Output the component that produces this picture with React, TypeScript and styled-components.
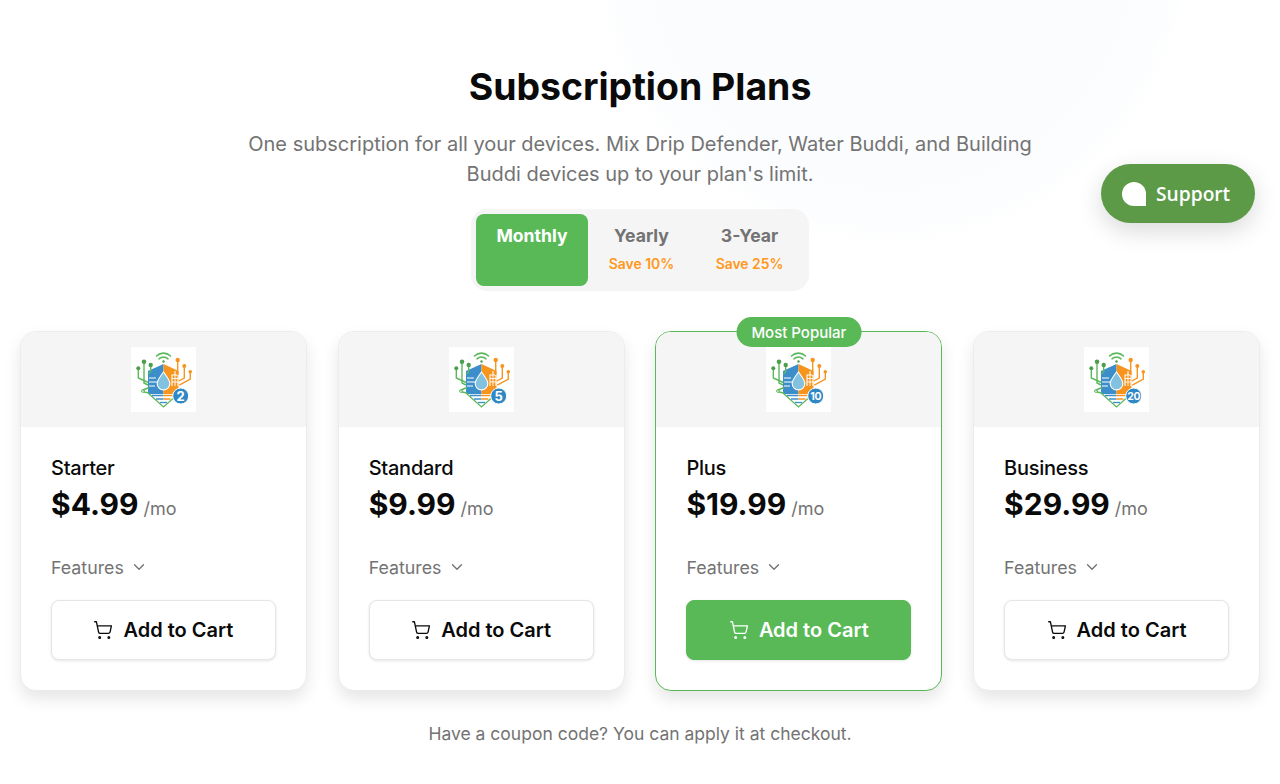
import React from "react";
import styled, { createGlobalStyle } from "styled-components";
import { ShoppingCart, ChevronDown } from "lucide-react";

const Global = createGlobalStyle`
  html, body { margin: 0; padding: 0; background: #fff; }
  body { font-family: Inter, "Liberation Sans", sans-serif; overflow: hidden; }
  * { box-sizing: border-box; }
`;

const Page = styled.div`
  position: relative;
  height: 784px;
  padding: 60px 20px 0;
  overflow: hidden;
  background: radial-gradient(circle 302px at 892px -55px, #fafcfd 0%, #fbfcfe 80%, #fcfdfe 92%, rgba(255,255,255,0) 100%), #fff;
`;

const Header = styled.header`
  display: flex;
  flex-direction: column;
  align-items: center;
`;

const Title = styled.h1`
  margin: 0;
  font-size: 37.4px;
  line-height: 54px;
  font-weight: 700;
  color: #0a0a0a;
`;

const Subtitle = styled.p`
  margin: 15px 0 0;
  width: 800px;
  font-size: 20px;
  line-height: 30px;
  font-weight: 400;
  color: #737373;
  text-align: center;
`;

const Toggle = styled.div`
  display: flex;
  margin-top: 20px;
  padding: 5px;
  background: #f5f5f5;
  border-radius: 16px;
`;

const ToggleButton = styled.div<{ $active?: boolean; $w: number }>`
  width: ${p => p.$w}px;
  height: 72px;
  padding-top: 10px;
  display: flex;
  flex-direction: column;
  align-items: center;
  border-radius: 8px;
  background: ${p => (p.$active ? "#59b957" : "transparent")};
  color: ${p => (p.$active ? "#fff" : "#737373")};
  font-size: 17.6px;
  line-height: 24px;
  font-weight: 700;
`;

const Save = styled.span`
  margin-top: 6px;
  font-size: 13.9px;
  line-height: 20px;
  font-weight: 600;
  color: #ff9820;
`;

const Grid = styled.div`
  display: grid;
  grid-template-columns: repeat(4, 1fr);
  gap: 30.8px;
  margin-top: 40px;
`;

const Card = styled.article<{ $popular?: boolean }>`
  position: relative;
  height: 360px;
  border: 1px solid ${p => (p.$popular ? "#59b957" : "#ececec")};
  border-radius: 16px;
  background: #fff;
  box-shadow: 0 8px 16px rgba(0, 0, 0, 0.1);
`;

const Badge = styled.div`
  position: absolute;
  top: -15px;
  left: 50%;
  transform: translateX(-50%);
  height: 30px;
  padding: 0 15px;
  display: flex;
  align-items: center;
  border-radius: 15px;
  background: #59b957;
  color: #fff;
  font-size: 15px;
  font-weight: 500;
  white-space: nowrap;
  z-index: 1;
`;

const ImageArea = styled.div`
  height: 95px;
  padding-top: 15px;
  display: flex;
  justify-content: center;
  align-items: flex-start;
  background: #f5f5f5;
  border-radius: 15px 15px 0 0;
`;

const LogoFrame = styled.svg`
  display: block;
  width: 65px;
  height: 65px;
  background: #fff;
`;

const Body = styled.div`
  padding: 26px 30px 0;
  display: flex;
  flex-direction: column;
`;

const Name = styled.h3`
  margin: 0;
  font-size: 20px;
  line-height: 30px;
  font-weight: 500;
  letter-spacing: -0.25px;
  color: #0a0a0a;
`;

const PriceRow = styled.div`
  display: flex;
  align-items: baseline;
  gap: 5px;
  height: 40px;
  margin-top: 1px;
`;

const Price = styled.span`
  font-size: 30px;
  line-height: 40px;
  font-weight: 700;
  color: #0a0a0a;
`;

const Per = styled.span`
  font-size: 18px;
  font-weight: 400;
  color: #737373;
`;

const Features = styled.div`
  display: flex;
  align-items: center;
  gap: 6px;
  margin-top: 29px;
  height: 28px;
  font-size: 17.8px;
  color: #737373;
`;

const CartButton = styled.button<{ $primary?: boolean }>`
  margin-top: 19px;
  height: 60px;
  width: 100%;
  display: flex;
  align-items: center;
  justify-content: center;
  gap: 10px;
  border-radius: 8px;
  border: 1px solid ${p => (p.$primary ? "#59b957" : "#e5e5e5")};
  background: ${p => (p.$primary ? "#59b957" : "#fff")};
  color: ${p => (p.$primary ? "#fff" : "#0a0a0a")};
  box-shadow: 0 1px 3px rgba(0, 0, 0, 0.1);
  font-family: inherit;
  font-size: 20px;
  font-weight: 600;
`;

const Coupon = styled.p`
  margin: 31px 0 0;
  font-size: 17.5px;
  line-height: 24px;
  color: #737373;
  text-align: center;
`;

const Support = styled.div`
  position: absolute;
  left: 1101px;
  top: 164px;
  width: 154px;
  height: 59px;
  display: flex;
  align-items: center;
  gap: 10px;
  padding-left: 21px;
  border-radius: 30px;
  background: #5c9a48;
  color: #fff;
  font-family: "Open Sans", sans-serif;
  font-size: 19.2px;
  font-weight: 600;
  box-shadow: 0 8px 24px rgba(0, 0, 0, 0.15);
`;

const Bubble = styled.span`
  display: block;
  width: 24px;
  height: 24px;
  background: #fff;
  border-radius: 50% 50% 0 50%;
`;

function Logo({ n }: { n: number }) {
  return (
    <LogoFrame viewBox="0 0 65 65" aria-hidden="true">
      {/* wifi */}
      <g fill="none" stroke="#5cb85c" strokeLinecap="round">
        <path d="M25.500 9a10 10 0 0 1 14 0" strokeWidth="1.600" />
        <path d="M28 11.800a6.500 6.500 0 0 1 9 0" strokeWidth="1.600" />
      </g>
      <circle cx="32.500" cy="14.500" r="1.200" fill="#4c9f4c" />
      {/* shield */}
      <path d="M32.500 17 17 24v23h15.500z" fill="#3c8ecb" />
      <path d="M32.500 17 47.500 24v23h-15z" fill="#f7941e" />
      {/* bottom point */}
      <path d="M17 47 32.500 60 48 47z" fill="#fff" />
      <path d="M17 46 32.500 60 47 47" fill="none" stroke="#5cb85c" strokeWidth="1.300" />
      <path d="M21 48.500h11.500M25 52h7.500" stroke="#3c8ecb" strokeWidth="1.400" />
      <path d="M32.500 48.500h10M32.500 52h7" stroke="#f7941e" strokeWidth="1.400" />
      <path d="M29 55.500h7" stroke="#3c8ecb" strokeWidth="1.300" />
      {/* drop */}
      <path d="M32.500 25c-3.200 4.700-6.300 7.800-6.300 11.600a6.300 6.300 0 0 0 12.600 0c0-3.800-3.100-6.900-6.300-11.600z" fill="#82c1e0" stroke="#fff" strokeWidth="1.100" />
      {/* arrows on the blue side */}
      <path d="M18 31h7M18 35h8M18 39h6" stroke="#fff" strokeWidth="1" />
      {/* building */}
      <path d="M41 39V28h6v11M44 24v4" fill="none" stroke="#fff" strokeWidth="1.100" />
      <path d="M41 31.500h6M41 35h6M44 28v11" stroke="#fff" strokeWidth=".9" />
      {/* green traces */}
      <g fill="none" stroke="#5cb85c" strokeWidth="1.400">
        <path d="M7.300 21v10l10 4.500" />
        <path d="M13 15v21l4 2" />
        <path d="M19.700 18v7l-2.700 2" />
        <path d="M12 43l6-2.500M13 45l5 1" />
      </g>
      <g fill="#4c9f4c">
        <circle cx="7.300" cy="21.300" r="2" />
        <circle cx="13" cy="14.700" r="2.300" />
        <circle cx="19.700" cy="18" r="2.200" />
      </g>
      <circle cx="12" cy="44" r="1.400" fill="none" stroke="#5cb85c" strokeWidth="1" />
      {/* orange traces */}
      <g fill="none" stroke="#f7941e" strokeWidth="1.400">
        <path d="M46.700 13v15" />
        <path d="M53.300 19v12l-5.500 3" />
        <path d="M59.300 24.700v7.500l-11 6" />
      </g>
      <g fill="#f7941e">
        <circle cx="46.700" cy="13" r="2.200" />
        <circle cx="53.300" cy="19" r="2" />
        <circle cx="59.300" cy="24.700" r="1.800" />
      </g>
      {/* device limit badge */}
      <circle cx="49.700" cy="49" r="8" fill="#2f87c4" stroke="#fff" strokeWidth="1" />
      <text x="49.700" y={n > 9 ? 52.800 : 53.600} textAnchor="middle" fontFamily="Inter, sans-serif" fontWeight="700" fontSize={n > 9 ? 10.500 : 13} letterSpacing={n > 9 ? -0.4 : 0} fill="#fff">{n}</text>
    </LogoFrame>
  );
}

const plans = [
  { name: "Starter", price: "$4.99", n: 2 },
  { name: "Standard", price: "$9.99", n: 5 },
  { name: "Plus", price: "$19.99", n: 10, popular: true },
  { name: "Business", price: "$29.99", n: 20 },
];

export default function App() {
  return (
    <Page>
      <Global />
      <Header>
        <Title>Subscription Plans</Title>
        <Subtitle>
          One subscription for all your devices. Mix Drip Defender, Water Buddi, and Building Buddi devices up to your plan's limit.
        </Subtitle>
        <Toggle>
          <ToggleButton $active $w={112}>Monthly</ToggleButton>
          <ToggleButton $w={107}>Yearly<Save>Save 10%</Save></ToggleButton>
          <ToggleButton $w={109}>3-Year<Save>Save 25%</Save></ToggleButton>
        </Toggle>
      </Header>
      <Grid>
        {plans.map(p => (
          <Card key={p.name} $popular={p.popular}>
            {p.popular && <Badge>Most Popular</Badge>}
            <ImageArea><Logo n={p.n} /></ImageArea>
            <Body>
              <Name>{p.name}</Name>
              <PriceRow><Price>{p.price}</Price><Per>/mo</Per></PriceRow>
              <Features>Features <ChevronDown size={18} strokeWidth={1.8} /></Features>
              <CartButton $primary={p.popular}>
                <ShoppingCart size={20} strokeWidth={1.6} />
                Add to Cart
              </CartButton>
            </Body>
          </Card>
        ))}
      </Grid>
      <Coupon>Have a coupon code? You can apply it at checkout.</Coupon>
      <Support><Bubble />Support</Support>
    </Page>
  );
}
